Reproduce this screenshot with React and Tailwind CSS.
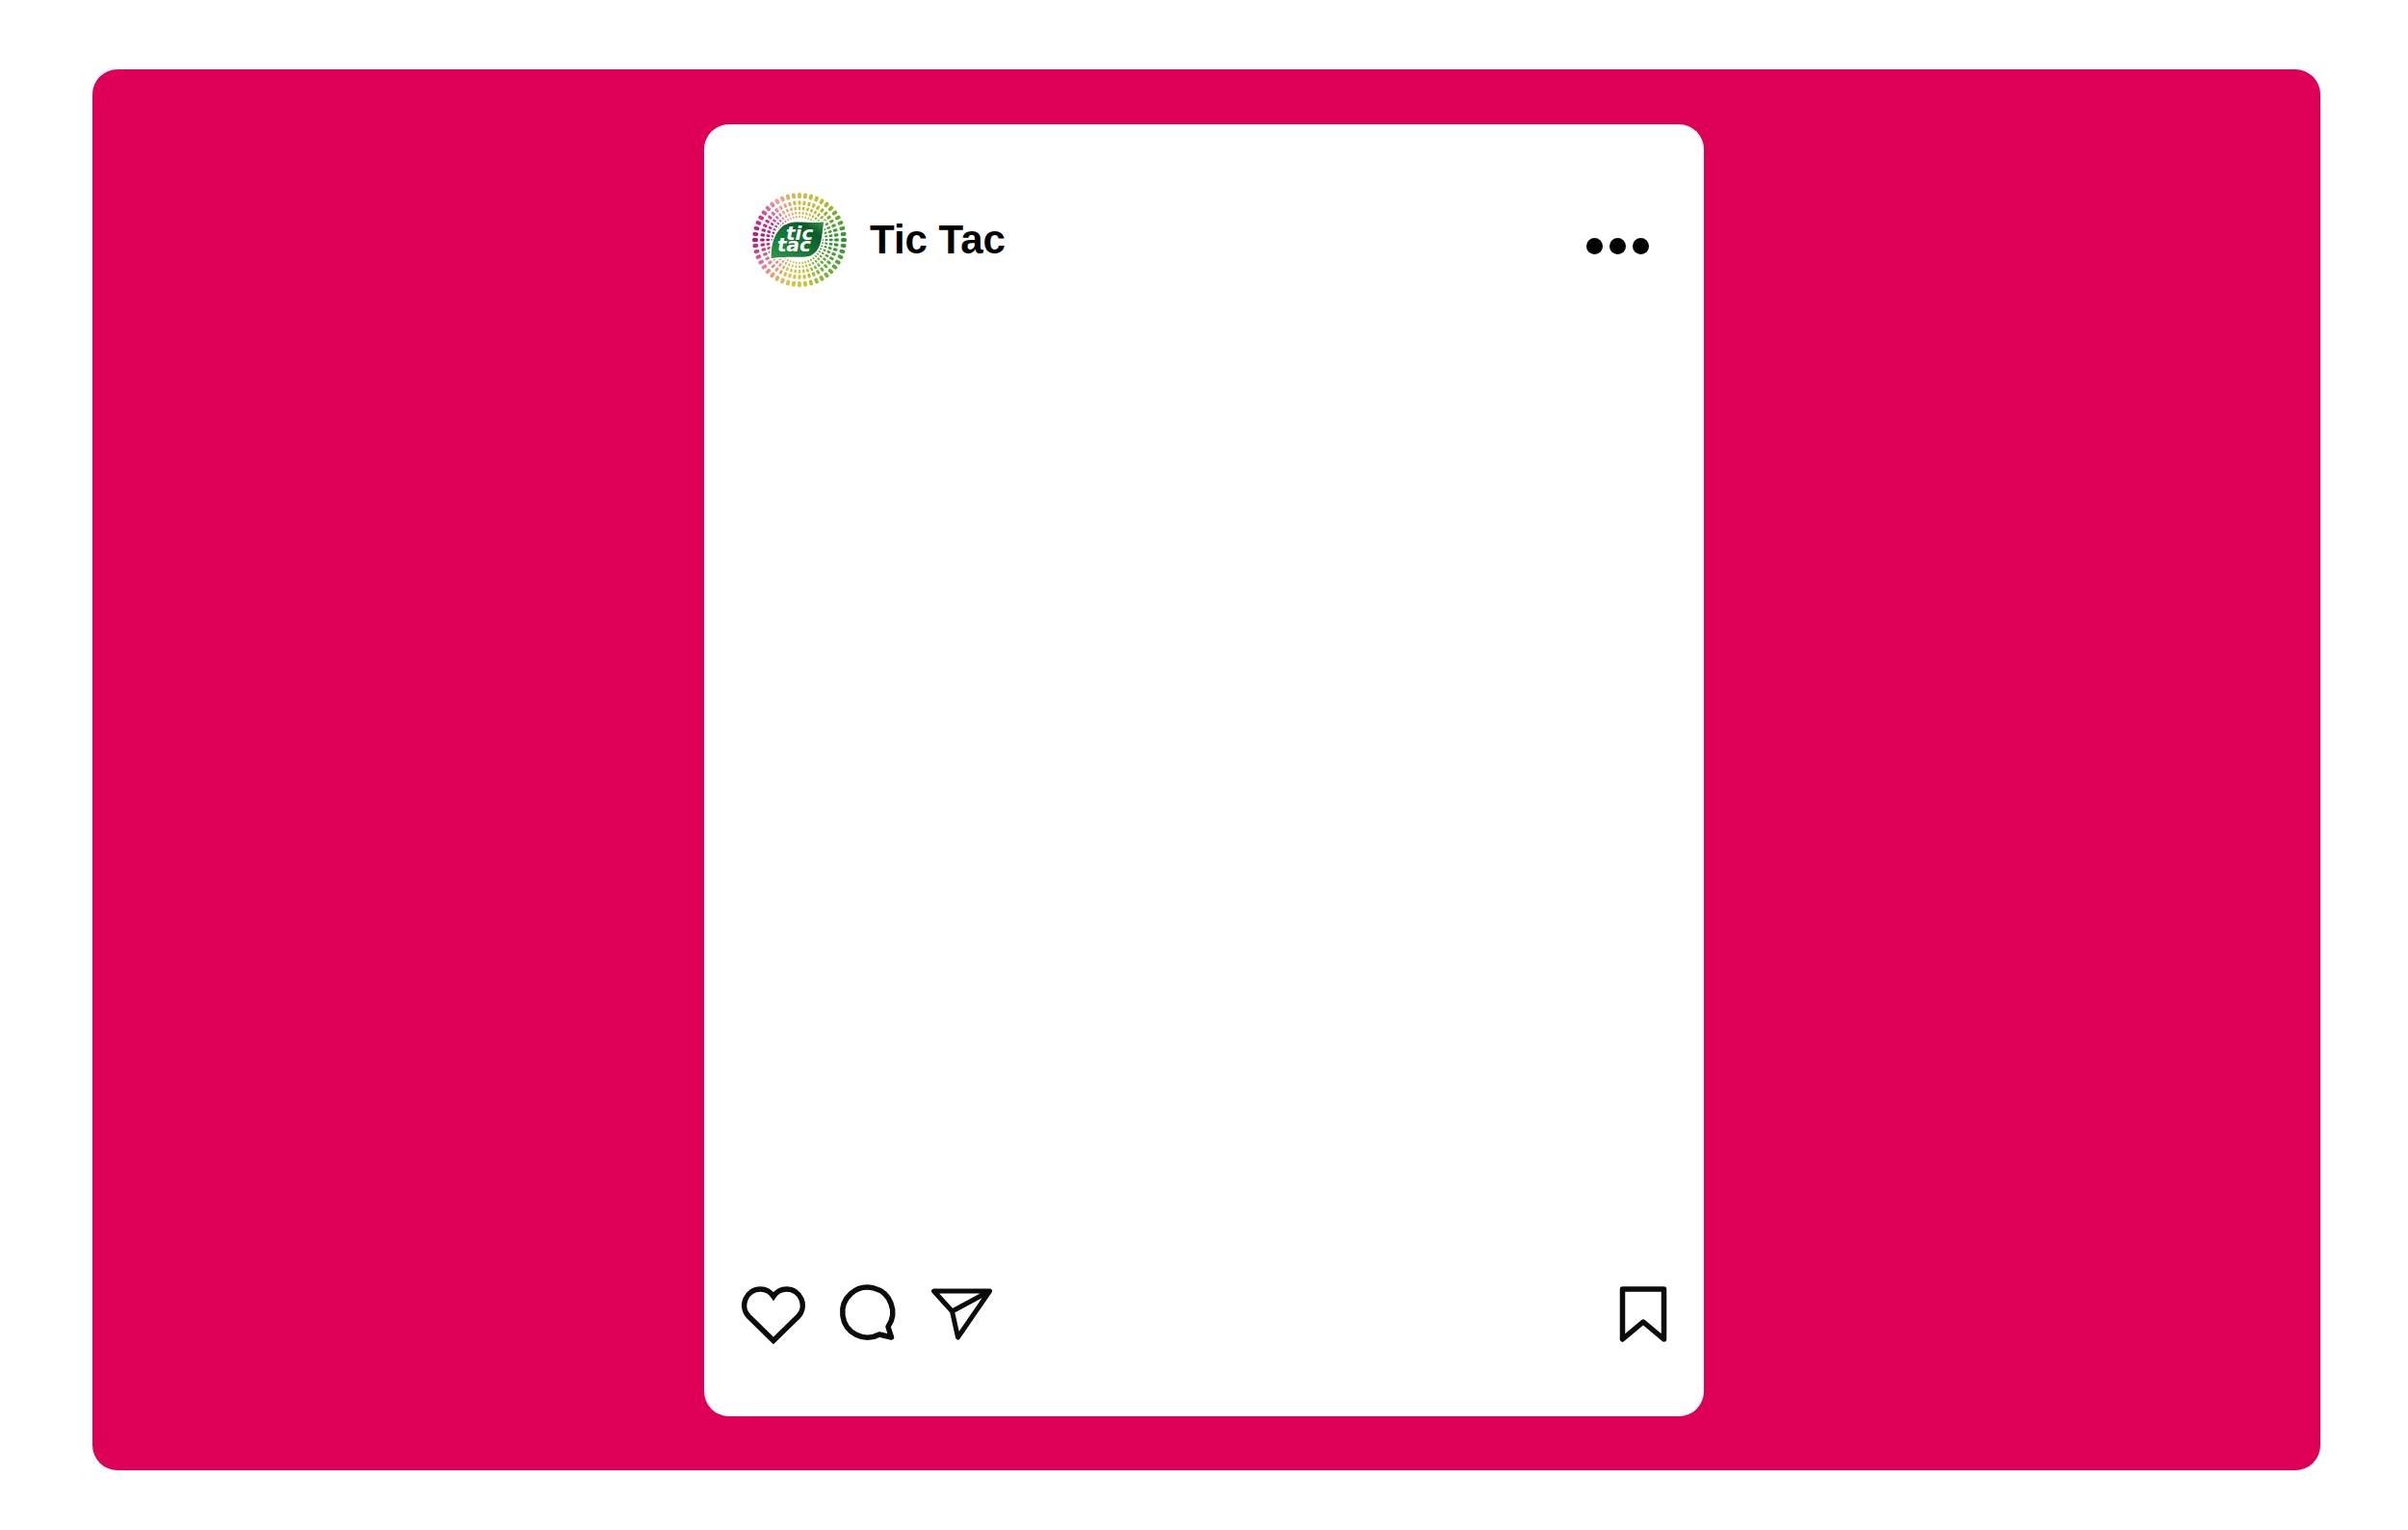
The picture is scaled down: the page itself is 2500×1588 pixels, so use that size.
import { useState } from 'react';

const RINGS = [
    { r: 46, w: 3.8, h: 5.8, count: 48 },
    { r: 38.5, w: 3.1, h: 4.6, count: 48 },
    { r: 32.8, w: 2.5, h: 3.8, count: 48 },
    { r: 28, w: 2, h: 3, count: 48 },
    { r: 24, w: 1.6, h: 2.4, count: 48 },
];

// colour stops around the ring, clockwise from the right
const STOPS = [
    [0, [44, 145, 48]],
    [50, [110, 178, 58]],
    [85, [205, 200, 55]],
    [110, [222, 190, 90]],
    [145, [228, 130, 150]],
    [180, [176, 20, 120]],
    [210, [206, 50, 140]],
    [240, [236, 160, 150]],
    [265, [214, 186, 80]],
    [300, [190, 190, 50]],
    [335, [90, 165, 50]],
    [360, [44, 145, 48]],
];

const colorAt = (deg) => {
    const i = STOPS.findIndex(([stop]) => stop > deg);
    const [a, from] = STOPS[i - 1];
    const [b, to] = STOPS[i];
    const t = (deg - a) / (b - a);
    return `rgb(${from.map((c, k) => Math.round(c + (to[k] - c) * t)).join(',')})`;
};

const Avatar = () => (
    <svg viewBox="0 0 98 98" className="w-[98px] h-[98px] shrink-0" role="img" aria-label="Tic Tac logo">
        <defs>
            <linearGradient id="leaf" x1="0" y1="1" x2="1" y2="0">
                <stop offset="0" stopColor="#2f9a48" />
                <stop offset="0.4" stopColor="#177a38" />
                <stop offset="0.75" stopColor="#0b5a2a" />
                <stop offset="1" stopColor="#3a9a50" />
            </linearGradient>
        </defs>
        {RINGS.map(({ r, w, h, count }) =>
            Array.from({ length: count }, (_, i) => {
                const deg = (i * 360) / count;
                return (
                    <rect
                        key={`${r}-${i}`}
                        x={49 + r - h / 2}
                        y={49 - w / 2}
                        width={h}
                        height={w}
                        rx={w / 2.5}
                        fill={colorAt(deg)}
                        transform={`rotate(${deg} 49 49)`}
                    />
                );
            })
        )}
        <path d="M19 69 C18 50 25 30 46 29.500 C56 30 66 31 75 29.500 C73 42 74 60 61 66 C51 70 36 65 19 69 Z" fill="url(#leaf)" stroke="#fff" strokeWidth="1.5" />
        <text fontSize="20" className="font-['DejaVu_Sans',sans-serif] font-bold italic fill-white">
            <tspan x="35" y="49">tic</tspan>
            <tspan x="26" y="61">tac</tspan>
        </text>
    </svg>
);

const HeartIcon = () => (
    <svg viewBox="0 0 66 62" className="w-[66px] h-[62px]" fill="none" stroke="currentColor" strokeWidth="5.5">
        <path d="M33 57.500 L7.500 32.500 A16.800 16.800 0 0 1 19.500 4 C25.500 4 30 7 33 11.500 C36 7 40.500 4 46.500 4 A16.800 16.800 0 0 1 58.500 32.500 Z" />
    </svg>
);

const CommentIcon = () => (
    <svg viewBox="0 0 58 62" className="w-[58px] h-[62px] overflow-visible" fill="none" stroke="currentColor" strokeWidth="5.5" strokeLinejoin="round">
        <path d="M50 43 A26 26 0 1 0 41 51 L53.500 54 Z" />
    </svg>
);

const ShareIcon = () => (
    <svg viewBox="0 0 64 62" className="w-[64px] h-[62px]" fill="none" stroke="currentColor" strokeWidth="5" strokeLinejoin="round">
        <path d="M3.500 6 H61.500 L28.500 54 L22.500 27 Z M22.500 27 L61.500 6" />
    </svg>
);

const SaveIcon = () => (
    <svg viewBox="0 0 50 62" className="w-[50px] h-[62px]" fill="none" stroke="currentColor" strokeWidth="5.5" strokeLinejoin="round">
        <path d="M3.500 4 H46.500 V56 L25 38 L3.500 56 Z" />
    </svg>
);

const PostCard = () => {
    const [liked, setLiked] = useState(false);
    const [saved, setSaved] = useState(false);

    return (
        <article className="w-full max-w-[1038px] flex flex-col justify-between bg-white rounded-[26px] pt-[71px] pb-[74px] text-black">
            <header className="flex items-center justify-between pl-[50px] pr-[57px]">
                <div className="flex items-center gap-6">
                    <Avatar />
                    <h1 className="text-[42px] leading-[48px] font-bold">Tic Tac</h1>
                </div>
                <button type="button" aria-label="More options" className="flex gap-[7px] pt-3">
                    <span className="size-[17px] rounded-full bg-black" />
                    <span className="size-[17px] rounded-full bg-black" />
                    <span className="size-[17px] rounded-full bg-black" />
                </button>
            </header>

            <footer className="flex items-center justify-between pl-[39px] pr-[38px] text-[#0c0c0c]">
                <div className="flex items-center gap-9">
                    <button type="button" aria-label="Like" aria-pressed={liked} onClick={() => setLiked(!liked)}>
                        <HeartIcon />
                    </button>
                    <button type="button" aria-label="Comment">
                        <CommentIcon />
                    </button>
                    <button type="button" aria-label="Share">
                        <ShareIcon />
                    </button>
                </div>
                <button type="button" aria-label="Save" aria-pressed={saved} onClick={() => setSaved(!saved)}>
                    <SaveIcon />
                </button>
            </footer>
        </article>
    );
};

const App = () => (
    <div className="min-h-screen flex bg-white pt-[72px] pb-[62px] pl-24 pr-[91px] font-['Liberation_Sans',Arial,sans-serif]">
        <main className="flex-1 flex justify-center bg-[#de0057] rounded-[26px] pt-[57px] pb-14 pr-[5px]">
            <PostCard />
        </main>
    </div>
);

export default App;
